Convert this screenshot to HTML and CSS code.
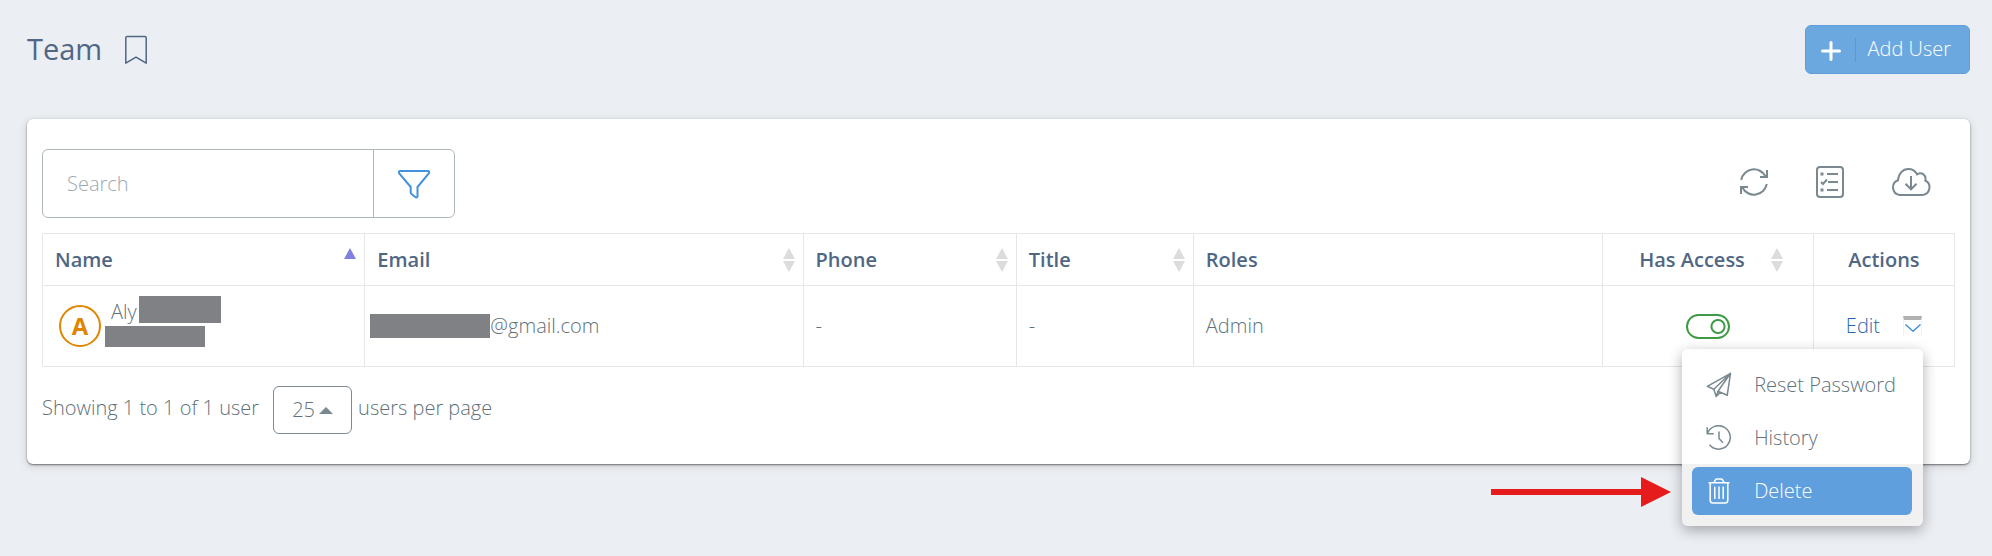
FILE: index.html
```html
<!DOCTYPE html>
<html lang="en">
<head>
<meta charset="utf-8">
<title>Team</title>
<link rel="stylesheet" href="styles.css">
</head>
<body>
<header class="page-header">
  <h1 class="page-title">Team</h1>
  <button class="icon-button bookmark" type="button" aria-label="Bookmark">
    <svg width="24" height="30" viewBox="0 0 24 30"><path d="M1.800 28.200V2.800a1.400 1.400 0 0 1 1.400-1.400h17.600a1.400 1.400 0 0 1 1.400 1.400v25.400L12 22.200z"/></svg>
  </button>
  <button class="add-user" type="button">
    <svg width="20" height="20" viewBox="0 0 20 20"><path d="M10 1.500v17M1.500 10h17"/></svg>
    <span class="add-user-label">Add User</span>
  </button>
</header>

<main class="card">
  <div class="toolbar">
    <div class="search">
      <input class="search-input" type="text" placeholder="Search" aria-label="Search">
      <button class="filter" type="button" aria-label="Filter">
        <svg width="34" height="30" viewBox="0 0 34 30"><path d="M3 2h28q2 .6.800 2.400L20.500 18v9.400q-.5 1.500-2 .8L14.500 25q-.8-.6-.8-1.600V18L2.200 4.400Q1.200 2.600 3 2z"/></svg>
      </button>
    </div>
    <div class="tools">
      <button class="icon-button" type="button" aria-label="Refresh">
        <svg width="30" height="30" viewBox="0 0 30 30"><path d="M2.200 13A13 13 0 0 1 26.500 9.300M28 3v7h-7M27.800 17A13 13 0 0 1 3.500 20.700M2 27v-7h7"/></svg>
      </button>
      <button class="icon-button" type="button" aria-label="Columns">
        <svg width="28" height="32" viewBox="0 0 28 32"><rect x="1" y="1" width="26" height="30" rx="3"/><path d="M11 8h11M12 16h10M11 24h11M5 16l2 2 4-4.500"/><path class="solid" d="M4.500 6.500h3v3h-3zM4.500 22.500h3v3h-3z"/></svg>
      </button>
      <button class="icon-button" type="button" aria-label="Download">
        <svg width="40" height="28" viewBox="0 0 40 28"><path d="M8.500 27A7.700 7.700 0 0 1 7 12.200C7.500 5.500 12 1 17.300 1c4 0 7.200 2.200 8.700 5.300 5-2.800 9.500 1 8.300 6.200A7.700 7.700 0 0 1 31.500 27zM20 8v13M14.500 15.800l5.500 5.500 5.500-5.500"/></svg>
      </button>
    </div>
  </div>

  <table class="users">
    <colgroup><col class="c-name"><col class="c-email"><col class="c-phone"><col class="c-title"><col class="c-roles"><col class="c-access"><col class="c-actions"></colgroup>
    <thead>
      <tr>
        <th><div class="head">Name<svg class="sort" width="12" height="24" viewBox="0 0 12 24"><path class="sorted" d="M6 0l6 11H0z"/></svg></div></th>
        <th><div class="head">Email<svg class="sort" width="12" height="24" viewBox="0 0 12 24"><path d="M6 0l6 11H0zM0 13h12L6 24z"/></svg></div></th>
        <th><div class="head">Phone<svg class="sort" width="12" height="24" viewBox="0 0 12 24"><path d="M6 0l6 11H0zM0 13h12L6 24z"/></svg></div></th>
        <th><div class="head">Title<svg class="sort" width="12" height="24" viewBox="0 0 12 24"><path d="M6 0l6 11H0zM0 13h12L6 24z"/></svg></div></th>
        <th><div class="head">Roles</div></th>
        <th><div class="head head-access">Has Access<svg class="sort" width="12" height="24" viewBox="0 0 12 24"><path d="M6 0l6 11H0zM0 13h12L6 24z"/></svg></div></th>
        <th><div class="head head-center">Actions</div></th>
      </tr>
    </thead>
    <tbody>
      <tr>
        <td class="name-cell">
          <div class="person">
            <span class="avatar">A</span>
            <div class="person-lines">
              <div class="person-name">Aly<span class="redacted redacted-name"></span></div>
              <span class="redacted redacted-sub"></span>
            </div>
          </div>
        </td>
        <td class="email-cell"><div class="email"><span class="redacted redacted-email"></span>@gmail.com</div></td>
        <td>-</td>
        <td>-</td>
        <td>Admin</td>
        <td class="center"><input class="toggle" type="checkbox" checked aria-label="Has Access"></td>
        <td class="center">
          <div class="actions">
            <a class="edit" href="#">Edit</a>
            <button class="more" type="button" aria-label="More actions" aria-expanded="true">
              <svg width="16" height="8" viewBox="0 0 16 8"><path d="M.5.5L8 7.200 15.500.5"/></svg>
            </button>
            <div class="menu">
              <button class="menu-item" type="button">
                <svg width="26" height="26" viewBox="0 0 26 26"><path d="M24.500 1.300L1.300 14.300l6.500 3L24.500 1.300l-3.300 22-9.200-4.100L24.500 1.300M7.800 17.300l2.400 7.200 1.800-5.300M10.200 24.500l4.300-4.200"/></svg>Reset Password
              </button>
              <button class="menu-item" type="button">
                <svg width="26" height="26" viewBox="0 0 26 26"><path d="M1.200 2.200v6.600h6.600M1.600 8.400A11.700 11.700 0 1 1 3.500 19.800M13 6.500v7l4 4.200"/></svg>History
              </button>
              <button class="menu-item menu-item-active" type="button">
                <svg width="26" height="26" viewBox="0 0 26 26"><path d="M2.500 4.700h21M8 4.500l1.400-2.600q.5-.9 1.500-.9h4.200q1 0 1.500.9L18 4.500M4.200 5v17.200q0 2.800 2.800 2.800h12q2.800 0 2.800-2.800V5M8.800 8.500v12.500M13 8.500v12.500M17.200 8.500v12.500"/></svg>Delete
              </button>
              <svg class="pointer" width="180" height="30" viewBox="0 0 180 30"><path d="M0 12h150V0l30 15-30 15V18H0z"/></svg>
            </div>
          </div>
        </td>
      </tr>
    </tbody>
  </table>

  <div class="pager">
    <span class="pager-text">Showing 1 to 1 of 1 user</span>
    <button class="page-size" type="button" aria-label="Users per page: 25">25<svg width="14" height="7" viewBox="0 0 14 7"><path d="M0 7l7-7 7 7z"/></svg></button>
    <span class="pager-text">users per page</span>
  </div>
</main>
</body>
</html>
```
FILE: styles.css
```css
* { box-sizing: border-box; }

body {
  margin: 0;
  padding: 25px 22px 92px 27px;
  background: #ebeef3;
  color: #61717a;
  font: 300 20px/28px "Open Sans", "Noto Sans", sans-serif;
}

button, input { font: inherit; color: inherit; }
button { padding: 0; border: 0; background: none; cursor: pointer; }

svg { display: block; flex: none; }
.icon-button svg { fill: none; stroke: #7a8990; stroke-width: 2; }
.icon-button .solid { fill: #7a8990; stroke: none; }

.page-header { display: flex; align-items: center; margin-bottom: 45px; }
.page-title { margin: 0; padding-bottom: 2px; color: #506784; font-size: 29px; line-height: 40px; font-weight: 400; }
.bookmark { margin-left: 22px; }
.bookmark svg { stroke: #506784; stroke-width: 1.500; stroke-linejoin: round; }

.add-user {
  display: flex;
  align-items: center;
  height: 49px;
  margin-left: auto;
  padding: 0 18px 0 15px;
  border: 1px solid #5f9fdb;
  border-radius: 6px;
  background: #6ca8e0;
  color: #fff;
}
.add-user svg { margin-top: 3px; fill: none; stroke: #fff; stroke-width: 3; stroke-linecap: round; }
.add-user-label { margin-left: 14px; padding: 0 0 2px 12px; border-left: 1px solid #5b98d0; line-height: 22px; }

.card {
  padding: 30px 15px;
  border-radius: 6px;
  background: #fff;
  box-shadow: 0 1px 2px rgba(0, 0, 0, .5), 0 2px 10px rgba(0, 0, 0, .14);
}

.toolbar { display: flex; align-items: center; justify-content: space-between; margin-bottom: 15px; }
.search { display: flex; width: 413px; height: 69px; border: 1px solid #aeb8bb; border-radius: 6px; }
.search-input { flex: 1; min-width: 0; padding: 0 24px; border: 0; border-radius: 6px; background: none; outline: 0; }
.search-input::placeholder { color: #9ca8ae; opacity: 1; }
.filter { display: grid; place-items: center; width: 81px; border-left: 1px solid #aeb8bb; }
.filter svg { fill: none; stroke: #4292dc; stroke-width: 2; stroke-linejoin: round; }
.tools { display: flex; align-items: center; gap: 47px; padding: 0 24px 3px 0; }

.users { width: 100%; border-collapse: collapse; table-layout: fixed; }
.c-name { width: 16.860%; }
.c-email { width: 22.920%; }
.c-phone { width: 11.150%; }
.c-title { width: 9.260%; }
.c-roles { width: 21.380%; }
.c-access { width: 11.050%; }
.c-actions { width: 7.380%; }
.users th, .users td { padding: 0 12px; border: 1px solid #e6e8e8; text-align: left; }
.users th { height: 52px; color: #506784; font-weight: 600; }
.users td { height: 81px; }
.users .center { text-align: center; }
.head { display: flex; align-items: center; justify-content: space-between; }
.head-access { justify-content: flex-end; gap: 26px; padding-right: 18px; }
.head .sort { margin-right: -4px; }
.head-access .sort { margin-right: 0; }
.head-center { justify-content: center; }
.sort { fill: #dcdcdc; }
.sort .sorted { fill: #7f80e0; }

.users .name-cell { padding-left: 16px; }
.person { display: flex; align-items: center; gap: 4px; }
.avatar {
  display: grid;
  place-items: center;
  width: 42px;
  height: 42px;
  border: 2px solid #df8600;
  border-radius: 50%;
  color: #df8600;
  font-size: 24px;
  font-weight: 700;
}
.person-lines { display: grid; gap: 3px; padding-bottom: 10px; }
.person-name { display: flex; align-items: flex-start; gap: 2px; padding-left: 6px; line-height: 32px; height: 27px; }
.redacted { display: block; background: #808184; }
.redacted-name { width: 82px; height: 27px; }
.redacted-sub { width: 100px; height: 21px; }
.redacted-email { width: 120px; height: 24px; }
.users .email-cell { padding-left: 5px; }
.email { display: flex; align-items: center; }

.toggle {
  appearance: none;
  display: inline-block;
  width: 44px;
  height: 25px;
  margin: 0 0 2px;
  border: 2px solid #3f9a45;
  border-radius: 13px;
  background: radial-gradient(circle at 30px 50%, transparent 5px, #3f9a45 6px, #3f9a45 7px, transparent 8px);
  vertical-align: middle;
}

.actions { position: relative; display: inline-flex; align-items: center; gap: 23px; }
.edit { color: #1f69b2; text-decoration: none; }
.more {
  display: grid;
  place-items: center;
  width: 19px;
  height: 20px;
  border: 1px solid #f0f0f0;
  border-top: 4px solid #b1b1b1;
  border-bottom: 0;
}
.more svg { fill: none; stroke: #4292dc; stroke-width: 1.500; }

.menu {
  position: absolute;
  z-index: 2;
  top: 37px;
  right: -1px;
  display: grid;
  gap: 5px;
  padding: 12px 11px 11px 10px;
  border-radius: 6px;
  background: linear-gradient(#fff 115px, #f1f1f1 115px);
  box-shadow: 0 4px 14px rgba(0, 0, 0, .32);
}
.menu-item {
  display: flex;
  align-items: center;
  gap: 22px;
  height: 48px;
  padding: 0 16px 0 14px;
  border-radius: 6px;
  white-space: nowrap;
}
.menu-item svg { fill: none; stroke: #7a8990; stroke-width: 1.500; stroke-linejoin: round; }
.menu-item-active { background: #5f9fdd; color: #fff; }
.menu-item-active svg { stroke: #fff; }
.pointer { position: absolute; right: calc(100% + 11px); bottom: 19px; fill: #e61b1b; }

.pager { display: flex; align-items: center; margin-top: 19px; }
.pager-text { padding-bottom: 4px; }
.page-size {
  display: flex;
  align-items: center;
  justify-content: center;
  gap: 4px;
  width: 79px;
  height: 48px;
  margin: 0 6px 0 14px;
  border: 1px solid #7d8b92;
  border-radius: 6px;
}
.page-size svg { fill: #7a8990; }
```
